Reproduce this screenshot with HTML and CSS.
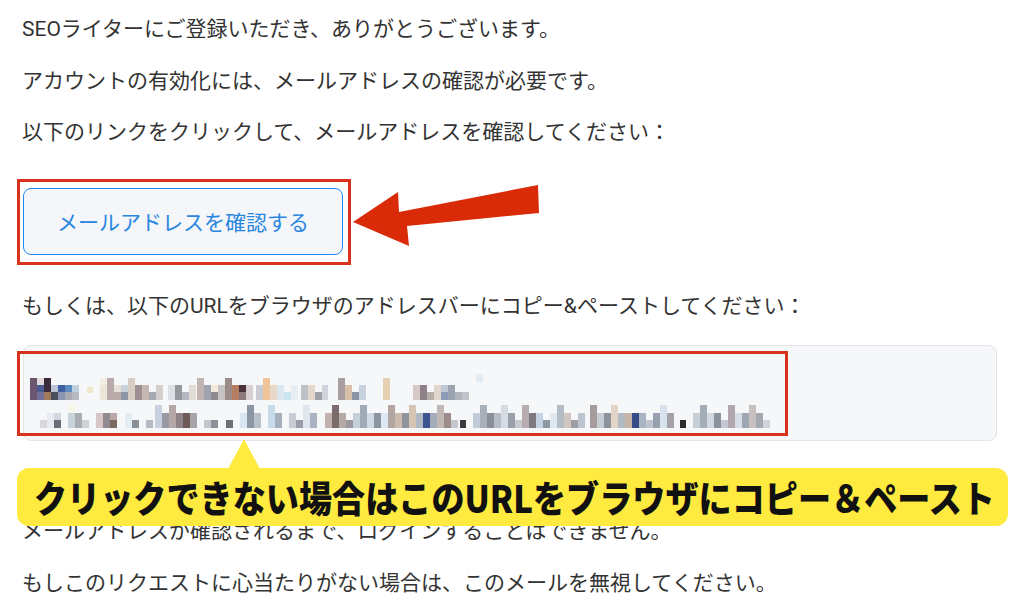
FILE: index.html
```html
<!DOCTYPE html>
<html>
<head>
    <meta charset="utf-8">
    <title>メールアドレスの確認</title>
    <link rel="stylesheet" href="styles.css">
</head>
<body>
    <div class="mail">
        <p>SEOライターにご登録いただき、ありがとうございます。</p>
        <p>アカウントの有効化には、メールアドレスの確認が必要です。</p>
        <p>以下のリンクをクリックして、メールアドレスを確認してください：</p>

        <div class="cta">
            <a class="btn" href="#">メールアドレスを確認する</a>
            <span class="mark mark-btn"></span>
            <svg class="arrow" width="210" height="80" viewBox="0 0 210 80">
                <polygon points="13,47 58,17 59,37 198,10 199,38 67,51 69,71" fill="#d92b07"/>
            </svg>
        </div>

        <p>もしくは、以下のURLをブラウザのアドレスバーにコピー&amp;ペーストしてください：</p>

        <div class="url-box">
            <!-- ぼかし済みのURL -->
            <svg class="mosaic" width="750" height="56" viewBox="0 0 750 56">
                <rect x="0" y="4" width="7" height="22" fill="#6b5670"/>
                <rect x="7" y="4" width="7" height="7" fill="#e2d9de"/>
                <rect x="7" y="11" width="7" height="7" fill="#4b5a90"/>
                <rect x="7" y="18" width="7" height="8" fill="#72709a"/>
                <rect x="14" y="4" width="7" height="14" fill="#3b2a3c"/>
                <rect x="14" y="18" width="7" height="8" fill="#a07a5a"/>
                <rect x="21" y="11" width="7" height="7" fill="#bcc3d4"/>
                <rect x="21" y="18" width="7" height="8" fill="#4a4e5a"/>
                <rect x="28" y="11" width="7" height="7" fill="#3f5fa0"/>
                <rect x="28" y="18" width="7" height="8" fill="#8a96b0"/>
                <rect x="35" y="11" width="7" height="7" fill="#5a8cc0"/>
                <rect x="35" y="18" width="7" height="8" fill="#a8a8b0"/>
                <rect x="42" y="11" width="7" height="7" fill="#c0d0e0"/>
                <rect x="42" y="18" width="7" height="8" fill="#b8b8c0"/>
                <rect x="57" y="13" width="6" height="6" fill="#f0e6c8"/>
                <rect x="70" y="4" width="7" height="7" fill="#f3efe2"/>
                <rect x="70" y="11" width="7" height="15" fill="#ece6da"/>
                <rect x="77" y="4" width="7" height="22" fill="#b8a9aa"/>
                <rect x="84" y="11" width="7" height="7" fill="#e8e0d8"/>
                <rect x="84" y="18" width="7" height="8" fill="#b9aca8"/>
                <rect x="91" y="11" width="7" height="7" fill="#c9d2dc"/>
                <rect x="91" y="18" width="7" height="8" fill="#8e96a6"/>
                <rect x="98" y="4" width="7" height="22" fill="#d8cdc4"/>
                <rect x="105" y="11" width="7" height="15" fill="#9f8f92"/>
                <rect x="112" y="11" width="7" height="15" fill="#c4b6b0"/>
                <rect x="119" y="18" width="7" height="8" fill="#a6a9b0"/>
                <rect x="126" y="11" width="7" height="15" fill="#d4cfcc"/>
                <rect x="138" y="11" width="7" height="15" fill="#dcdfe4"/>
                <rect x="145" y="11" width="7" height="15" fill="#94989e"/>
                <rect x="152" y="18" width="7" height="8" fill="#b4b8c0"/>
                <rect x="159" y="11" width="7" height="15" fill="#e2dcd6"/>
                <rect x="167" y="4" width="7" height="22" fill="#c0b4b0"/>
                <rect x="174" y="11" width="7" height="15" fill="#9da4b0"/>
                <rect x="181" y="11" width="7" height="7" fill="#f2e8dc"/>
                <rect x="181" y="18" width="7" height="8" fill="#8f8a8e"/>
                <rect x="188" y="11" width="7" height="15" fill="#c7c2c4"/>
                <rect x="195" y="4" width="7" height="22" fill="#9c8c88"/>
                <rect x="202" y="11" width="7" height="15" fill="#b57d62"/>
                <rect x="209" y="11" width="7" height="7" fill="#4a3038"/>
                <rect x="209" y="18" width="7" height="8" fill="#8a7a7e"/>
                <rect x="216" y="11" width="7" height="15" fill="#d8d0d0"/>
                <rect x="226" y="11" width="7" height="15" fill="#c8ccd2"/>
                <rect x="233" y="4" width="7" height="22" fill="#f0c49a"/>
                <rect x="240" y="11" width="7" height="15" fill="#e8d8c8"/>
                <rect x="247" y="11" width="7" height="15" fill="#dbe6ef"/>
                <rect x="254" y="18" width="7" height="8" fill="#c9e6f0"/>
                <rect x="261" y="11" width="7" height="15" fill="#e6eef4"/>
                <rect x="271" y="11" width="7" height="15" fill="#bdc0c6"/>
                <rect x="278" y="11" width="7" height="15" fill="#e4d7cc"/>
                <rect x="285" y="18" width="7" height="8" fill="#9ea2a8"/>
                <rect x="292" y="11" width="6" height="15" fill="#d0d4dc"/>
                <rect x="308" y="4" width="7" height="22" fill="#a89ea2"/>
                <rect x="315" y="11" width="7" height="15" fill="#d8c0a8"/>
                <rect x="322" y="18" width="7" height="8" fill="#8a94a4"/>
                <rect x="329" y="11" width="7" height="15" fill="#c6d2de"/>
                <rect x="353" y="4" width="7" height="22" fill="#e6d0b2"/>
                <rect x="383" y="11" width="7" height="15" fill="#d6c8c4"/>
                <rect x="390" y="11" width="7" height="15" fill="#8d8088"/>
                <rect x="397" y="18" width="7" height="8" fill="#b6aea8"/>
                <rect x="404" y="11" width="7" height="15" fill="#e0d6cc"/>
                <rect x="411" y="11" width="7" height="7" fill="#c2c9d6"/>
                <rect x="411" y="18" width="7" height="8" fill="#8c9cb8"/>
                <rect x="418" y="11" width="7" height="15" fill="#9aa4b0"/>
                <rect x="425" y="18" width="7" height="8" fill="#b0b4bc"/>
                <rect x="432" y="18" width="7" height="8" fill="#c0c4ca"/>
                <rect x="446" y="0" width="7" height="8" fill="#e2ebf4"/>

                <rect x="10" y="46" width="7" height="8" fill="#d8d8dc"/>
                <rect x="17" y="39" width="7" height="15" fill="#e6ecf2"/>
                <rect x="24" y="39" width="7" height="7" fill="#d4d8de"/>
                <rect x="24" y="46" width="7" height="8" fill="#6a6e76"/>
                <rect x="38" y="31" width="7" height="8" fill="#f4f6ea"/>
                <rect x="38" y="39" width="7" height="15" fill="#c8d2da"/>
                <rect x="45" y="39" width="7" height="15" fill="#a8aeb4"/>
                <rect x="52" y="46" width="7" height="8" fill="#cfd2d6"/>
                <rect x="66" y="39" width="7" height="15" fill="#d6c6c8"/>
                <rect x="73" y="39" width="7" height="15" fill="#8e8a90"/>
                <rect x="80" y="39" width="7" height="7" fill="#b8a8a8"/>
                <rect x="80" y="46" width="7" height="8" fill="#7d6a5e"/>
                <rect x="95" y="39" width="7" height="15" fill="#e2eef4"/>
                <rect x="102" y="46" width="7" height="8" fill="#8a9098"/>
                <rect x="116" y="46" width="7" height="8" fill="#b6bac2"/>
                <rect x="125" y="31" width="7" height="23" fill="#c9d0e0"/>
                <rect x="132" y="39" width="7" height="15" fill="#9a9aa4"/>
                <rect x="139" y="31" width="7" height="23" fill="#b4a8a8"/>
                <rect x="146" y="39" width="7" height="15" fill="#8f8288"/>
                <rect x="153" y="39" width="7" height="15" fill="#6f5a58"/>
                <rect x="160" y="39" width="7" height="15" fill="#a8a4a8"/>
                <rect x="174" y="46" width="7" height="8" fill="#c2c6cc"/>
                <rect x="181" y="46" width="7" height="8" fill="#8c9098"/>
                <rect x="196" y="46" width="7" height="8" fill="#6e7076"/>
                <rect x="210" y="39" width="7" height="15" fill="#d8e6f2"/>
                <rect x="217" y="31" width="7" height="23" fill="#8c96a4"/>
                <rect x="224" y="39" width="7" height="15" fill="#b8c0ca"/>
                <rect x="238" y="31" width="7" height="23" fill="#c6dcea"/>
                <rect x="245" y="39" width="7" height="15" fill="#a4b0bc"/>
                <rect x="259" y="39" width="7" height="15" fill="#c8ccd4"/>
                <rect x="266" y="46" width="7" height="8" fill="#9a9ea6"/>
                <rect x="273" y="31" width="7" height="23" fill="#e0e6ee"/>
                <rect x="280" y="39" width="7" height="15" fill="#a8b2c0"/>
                <rect x="295" y="39" width="7" height="15" fill="#c0b2ac"/>
                <rect x="302" y="31" width="7" height="23" fill="#7c6c6c"/>
                <rect x="309" y="39" width="7" height="15" fill="#b6aaa6"/>
                <rect x="316" y="46" width="7" height="8" fill="#9a9aa0"/>
                <rect x="323" y="39" width="7" height="15" fill="#c4d0da"/>
                <rect x="330" y="31" width="7" height="23" fill="#a0aab8"/>
                <rect x="337" y="39" width="7" height="15" fill="#d0dae6"/>
                <rect x="344" y="39" width="7" height="15" fill="#8c94a0"/>
                <rect x="351" y="39" width="7" height="15" fill="#dce8f2"/>
                <rect x="358" y="31" width="7" height="23" fill="#b2a6a0"/>
                <rect x="365" y="39" width="7" height="15" fill="#ccbcb0"/>
                <rect x="372" y="39" width="7" height="15" fill="#8e949c"/>
                <rect x="379" y="31" width="7" height="23" fill="#d6c4b4"/>
                <rect x="386" y="39" width="7" height="15" fill="#b0b8c2"/>
                <rect x="393" y="39" width="7" height="15" fill="#3e5490"/>
                <rect x="400" y="39" width="7" height="15" fill="#a4acbc"/>
                <rect x="407" y="31" width="7" height="23" fill="#c2b8b6"/>
                <rect x="414" y="39" width="7" height="15" fill="#9c8c8c"/>
                <rect x="421" y="46" width="7" height="8" fill="#c4c8ce"/>
                <rect x="430" y="46" width="6" height="8" fill="#3e3a3c"/>
                <rect x="443" y="39" width="7" height="15" fill="#c2ccd8"/>
                <rect x="450" y="31" width="7" height="23" fill="#a8b0bc"/>
                <rect x="457" y="39" width="7" height="15" fill="#8a8e96"/>
                <rect x="464" y="39" width="7" height="15" fill="#b8bcc4"/>
                <rect x="471" y="31" width="7" height="23" fill="#d6dce4"/>
                <rect x="478" y="39" width="7" height="15" fill="#9aa0aa"/>
                <rect x="485" y="46" width="7" height="8" fill="#c6cad0"/>
                <rect x="492" y="31" width="7" height="23" fill="#b8acb0"/>
                <rect x="499" y="39" width="7" height="15" fill="#7e7a80"/>
                <rect x="506" y="39" width="7" height="15" fill="#c4d4e2"/>
                <rect x="513" y="46" width="7" height="8" fill="#8e96a2"/>
                <rect x="520" y="39" width="7" height="15" fill="#dfe7ef"/>
                <rect x="527" y="31" width="7" height="23" fill="#b4bcc6"/>
                <rect x="534" y="39" width="7" height="15" fill="#d2c6c0"/>
                <rect x="541" y="46" width="7" height="8" fill="#9c9ea4"/>
                <rect x="548" y="39" width="7" height="15" fill="#bcc4ce"/>
                <rect x="560" y="31" width="7" height="23" fill="#a69c9e"/>
                <rect x="567" y="39" width="7" height="15" fill="#c8cdd4"/>
                <rect x="574" y="39" width="7" height="15" fill="#8d939c"/>
                <rect x="581" y="31" width="7" height="23" fill="#e2d4c6"/>
                <rect x="588" y="39" width="7" height="15" fill="#b4bac2"/>
                <rect x="595" y="39" width="7" height="15" fill="#c6b4a8"/>
                <rect x="602" y="39" width="7" height="15" fill="#364a84"/>
                <rect x="609" y="39" width="7" height="15" fill="#aab4c4"/>
                <rect x="616" y="46" width="7" height="8" fill="#bfc4cc"/>
                <rect x="623" y="39" width="7" height="15" fill="#96a0ae"/>
                <rect x="630" y="31" width="7" height="23" fill="#d8e2ec"/>
                <rect x="637" y="39" width="7" height="15" fill="#a6a2a8"/>
                <rect x="650" y="46" width="6" height="8" fill="#2e2a2c"/>
                <rect x="663" y="39" width="7" height="15" fill="#c6ced8"/>
                <rect x="670" y="31" width="7" height="23" fill="#a4acb8"/>
                <rect x="677" y="39" width="7" height="15" fill="#d2d8e0"/>
                <rect x="684" y="39" width="7" height="15" fill="#8c929c"/>
                <rect x="691" y="46" width="7" height="8" fill="#c4c8d0"/>
                <rect x="698" y="31" width="7" height="23" fill="#b0a8ac"/>
                <rect x="705" y="39" width="7" height="15" fill="#d8dee6"/>
                <rect x="712" y="39" width="7" height="15" fill="#9ea6b2"/>
                <rect x="719" y="31" width="7" height="23" fill="#c8c0c0"/>
                <rect x="726" y="39" width="7" height="15" fill="#a4a8b0"/>
                <rect x="733" y="46" width="7" height="8" fill="#d0d4da"/>
            </svg>
            <span class="mark mark-url"></span>
        </div>

        <p>メールアドレスが確認されるまで、ログインすることはできません。</p>
        <p>もしこのリクエストに心当たりがない場合は、このメールを無視してください。</p>

        <div class="callout">
            <div class="callout-clip"><span class="callout-text">クリックできない場合はこのURLをブラウザにコピー＆ペースト</span></div>
        </div>
    </div>
</body>
</html>
```

FILE: styles.css
```css
body {
    margin: 0;
    background: #ffffff;
    color: #333333;
    font-family: 'Roboto', 'Noto Sans CJK JP', sans-serif;
}
.mail {
    position: relative;
    padding: 14px 22px;
}
.mail p {
    font-size: 21px;
    line-height: 31.5px;
    margin: 0 0 20px;
}
.cta {
    position: relative;
    width: 320px;
    margin: 39px 0 36px 1px;
}
.btn {
    display: flex;
    align-items: center;
    justify-content: center;
    box-sizing: border-box;
    width: 320px;
    height: 67px;
    border: 1.5px solid #2289f2;
    border-radius: 8px;
    background: #f4f6f9;
    color: #2a86e0;
    font-size: 21px;
    text-decoration: none;
}
.mark {
    position: absolute;
    box-sizing: border-box;
    border: 3px solid #d8321c;
}
.mark-btn {
    left: -6px;
    top: -9px;
    width: 334px;
    height: 86px;
}
.arrow {
    position: absolute;
    left: 317px;
    top: -13px;
}
.url-box {
    position: relative;
    box-sizing: border-box;
    width: 974px;
    height: 96px;
    margin: 23px 0 75px 1px;
    padding: 28px 0 0 6px;
    border: 1px solid #e3e5e8;
    border-radius: 8px;
    background: #f6f7f9;
}
.mosaic {
    display: block;
}
.mark-url {
    left: -7px;
    top: 5px;
    width: 771px;
    height: 85px;
}
.callout {
    position: absolute;
    left: 17px;
    top: 468px;
    width: 991px;
    height: 58px;
    box-sizing: border-box;
    padding-left: 17px;
    border-radius: 12px;
    background: #ffea3f;
    color: #111111;
    font-family: 'Noto Sans CJK JP', sans-serif;
    font-size: 37px;
    font-weight: 900;
    line-height: 58px;
    white-space: nowrap;
}
.callout-clip {
    height: 58px;
    overflow: hidden;
}
.callout-text {
    display: inline-block;
    transform: scaleX(0.895);
    transform-origin: left center;
}
.callout::before {
    content: '';
    position: absolute;
    left: 211px;
    top: -29px;
    border-left: 16px solid transparent;
    border-right: 16px solid transparent;
    border-bottom: 30px solid #ffea3f;
}
```
